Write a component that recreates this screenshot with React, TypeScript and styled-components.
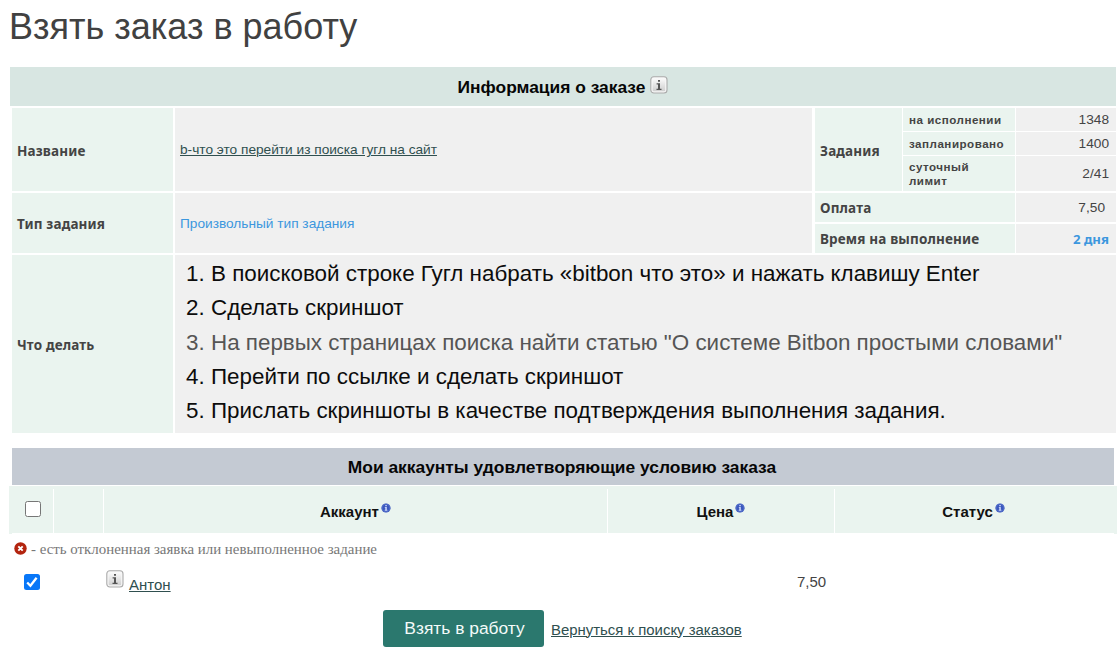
import React, { useState } from "react";
import styled, { createGlobalStyle } from "styled-components";

const GlobalStyle = createGlobalStyle`
  * { box-sizing: border-box; }
  body {
    margin: 0;
    background: #fff;
    color: #444;
    font-family: "Liberation Sans", Arial, sans-serif;
    overflow: hidden;
  }
`;

const Page = styled.main`
  width: 1119px;
  height: 655px;
  padding: 0 2px 0 9px;
`;

const Title = styled.h1`
  height: 67px;
  margin: 0;
  font-size: 36px;
  line-height: 53px;
  font-weight: 400;
  color: #414141;
  white-space: nowrap;
`;

const SectionHeader = styled.h2<{ $tone: "green" | "grey" }>`
  display: flex;
  align-items: center;
  justify-content: center;
  gap: 5px;
  margin: 0;
  font-size: 17.4px;
  font-weight: 700;
  color: #060606;
  white-space: nowrap;
  ${({ $tone }) =>
    $tone === "green"
      ? "height: 39px; margin: 0 1px; background: #d8e6e2; padding-top: 2px;"
      : "height: 37px; margin: 0 3px 1px; background: #c4cad3; padding-top: 1px; padding-right: 2px;"}
`;

const OrderGrid = styled.section`
  display: grid;
  grid-template-columns: 161px 637px 302px;
  grid-template-rows: 83px 60px 178px;
  column-gap: 2px;
  row-gap: 2px;
  margin: 2px 0 15px 3px;
`;

const LabelCell = styled.div<{ $shift?: number }>`
  display: flex;
  align-items: center;
  padding: ${({ $shift = 0 }) => $shift}px 5px 0;
  background: #eaf4ef;
  font: 700 13.5px "Noto Sans", sans-serif;
  letter-spacing: 0.15px;
  white-space: nowrap;
  color: #444;
`;

const ValueCell = styled.div`
  display: flex;
  align-items: center;
  padding: 0 5px;
  background: #f0f0f0;
  font-size: 13.68px;
`;

const TaskLink = styled.a`
  color: #2f4f4f;
  text-decoration: underline;
  white-space: nowrap;
`;

const TypeName = styled.span`
  color: #3c97de;
  white-space: nowrap;
`;

const TaskStats = styled.div`
  display: grid;
  grid-template-columns: 87px 112px 100px;
  grid-template-rows: 23px 23px 35px;
  gap: 1px;
  margin-left: 1px;

  & > :first-child {
    grid-row: 1 / 4;
  }
`;

const TermStats = styled.div`
  display: grid;
  grid-template-columns: 200px 100px;
  grid-template-rows: 29px 29px;
  row-gap: 2px;
  column-gap: 1px;
  margin-left: 1px;
`;

const SmallLabel = styled.div`
  display: flex;
  align-items: center;
  padding: 0 0 0 6px;
  background: #eaf4ef;
  font-size: 11.6px;
  line-height: 13.5px;
  font-weight: 700;
  letter-spacing: 0.5px;
`;

const NumberCell = styled.div<{ $inset?: number }>`
  display: flex;
  align-items: center;
  justify-content: flex-end;
  padding-right: ${({ $inset = 7 }) => $inset}px;
  background: #f0f0f0;
  font-size: 13.7px;
`;

const Term = styled.strong`
  font: 700 13.2px "Noto Sans", sans-serif;
  color: #3c97de;
`;

const Instructions = styled.div`
  grid-column: 2 / 4;
  background: #f0f0f0;
`;

const Steps = styled.ol`
  margin: 0;
  padding: 2px 0 0 36px;
  font-size: 22.4px;
  line-height: 34.25px;
  color: #0c0c0c;
  white-space: nowrap;
`;

const Step = styled.li<{ $muted?: boolean }>`
  color: ${({ $muted }) => ($muted ? "#555" : "inherit")};
`;

const AccountsHead = styled.div`
  height: 48px;
  padding: 0 3px;
  background: #eaf4ef;
`;

const HeadRow = styled.div`
  display: grid;
  grid-template-columns: 42px 50px 504px 227px 1fr;
  height: 48px;
  padding-top: 3px;
  border-bottom: 1px solid #fff;
`;

const HeadCell = styled.div<{ $last?: boolean }>`
  display: flex;
  align-items: center;
  justify-content: center;
  gap: 2px;
  padding-right: ${({ $last }) => ($last ? 2 : 0)}px;
  border-right: ${({ $last }) => ($last ? "0" : "1px solid #fff")};
  font-size: 15px;
  font-weight: 700;
  color: #111;
`;

const CheckCell = styled(HeadCell)`
  justify-content: flex-start;
  align-items: flex-start;
  padding: 12px 0 0 13px;
`;

const BlueMark = styled.svg`
  width: 10px;
  height: 10px;
  margin-bottom: 7px;
`;

const Checkbox = styled.button<{ $on: boolean }>`
  display: grid;
  place-items: center;
  flex: none;
  width: 16px;
  height: 16px;
  padding: 0;
  border-radius: 2.5px;
  border: ${({ $on }) => ($on ? "0" : "1.4px solid #767676")};
  background: ${({ $on }) => ($on ? "#0877f8" : "#fff")};
`;

const Legend = styled.p`
  display: flex;
  align-items: center;
  gap: 4px;
  height: 30px;
  margin: 0;
  padding-left: 5px;
  font: 14.92px "Liberation Serif", serif;
  color: #777;
  white-space: nowrap;
`;

const RejectedMark = styled.svg`
  width: 13px;
  height: 13px;
  margin-bottom: 2px;
`;

const AccountRow = styled.div`
  display: grid;
  grid-template-columns: 82px 691px 1fr;
  height: 46px;
  padding-left: 15px;
  font-size: 15px;
`;

const CheckSlot = styled.div`
  padding-top: 10px;
`;

const AccountName = styled.div`
  display: flex;
  align-items: flex-start;
  gap: 5px;
  padding-top: 6px;
`;

const NameLink = styled(TaskLink)`
  margin-top: 6px;
  line-height: 17px;
`;

const Price = styled.div`
  padding-top: 9px;
  line-height: 17px;
`;

const Actions = styled.footer`
  display: flex;
  align-items: center;
  gap: 7px;
  padding-left: 374px;
`;

const TakeButton = styled.button`
  width: 161px;
  height: 37px;
  padding: 0 0 0 2px;
  border: 0;
  border-radius: 3px;
  background: #2b786e;
  color: #f4fbf9;
  font: 17.4px "Liberation Sans", Arial, sans-serif;
`;

const BackLink = styled(TaskLink)`
  font-size: 14.93px;
  margin-top: 1px;
`;

const GreyInfo = styled.svg`
  flex: none;
  width: 18px;
  height: 18px;
`;

const HeaderInfo = styled(GreyInfo)`
  margin-bottom: 6px;
`;

function InfoShape({ id }: { id: string }) {
  return (
    <>
      <defs>
        <linearGradient id={id} x1="0" y1="0" x2="0" y2="1">
          <stop offset="0" stopColor="#fafafa" />
          <stop offset="1" stopColor="#cfcfcf" />
        </linearGradient>
      </defs>
      <rect x="0.8" y="0.8" width="16.2" height="16.2" rx="3" fill="#f7f7f7" stroke="#aaa" strokeWidth="1.1" />
      <rect x="2.6" y="2.6" width="12.6" height="12.6" rx="1" fill={`url(#${id})`} />
      <path d="M8 3.9h2v1.9H8zM6.6 7.2H10v5.5h1.5V14H6.5v-1.3H8V8.5H6.6z" fill="#555" />
    </>
  );
}

function HelpMark() {
  return (
    <BlueMark viewBox="0 0 10 10">
      <circle cx="5" cy="5" r="4.6" fill="#3b58bd" />
      <circle cx="5" cy="5" r="3.9" fill="none" stroke="#5f79d2" strokeWidth="0.6" />
      <path d="M4.3 2h1.5v1.2H4.3zM3.8 4h2v2.8h.6v.9H3.7v-.9h.6V4.8h-.5z" fill="#cdd8fb" />
    </BlueMark>
  );
}

function Check({ on, onToggle, label }: { on: boolean; onToggle: () => void; label: string }) {
  return (
    <Checkbox $on={on} role="checkbox" aria-checked={on} aria-label={label} onClick={onToggle}>
      {on && (
        <svg width="16" height="16" viewBox="0 0 16 16">
          <path d="M3.2 8.5l3.2 3.2 6.2-8" fill="none" stroke="#fff" strokeWidth="2.3" />
        </svg>
      )}
    </Checkbox>
  );
}

const steps = [
  { text: "В поисковой строке Гугл набрать «bitbon что это» и нажать клавишу Enter" },
  { text: "Сделать скриншот" },
  { text: 'На первых страницах поиска найти статью "О системе Bitbon простыми словами"', muted: true },
  { text: "Перейти по ссылке и сделать скриншот" },
  { text: "Прислать скриншоты в качестве подтверждения выполнения задания." },
];

export default function App() {
  const [all, setAll] = useState(false);
  const [chosen, setChosen] = useState(true);

  return (
    <Page>
      <GlobalStyle />
      <Title>Взять заказ в работу</Title>
      <SectionHeader $tone="green">
        Информация о заказе
        <HeaderInfo viewBox="0 0 18 18">
          <InfoShape id="order-info" />
        </HeaderInfo>
      </SectionHeader>

      <OrderGrid>
        <LabelCell $shift={2}>Название</LabelCell>
        <ValueCell>
          <TaskLink>b-что это перейти из поиска гугл на сайт</TaskLink>
        </ValueCell>
        <TaskStats>
          <LabelCell $shift={2}>Задания</LabelCell>
          <SmallLabel>на исполнении</SmallLabel>
          <NumberCell>1348</NumberCell>
          <SmallLabel>запланировано</SmallLabel>
          <NumberCell>1400</NumberCell>
          <SmallLabel>
            суточный
            <br />
            лимит
          </SmallLabel>
          <NumberCell>2/41</NumberCell>
        </TaskStats>

        <LabelCell $shift={1}>Тип задания</LabelCell>
        <ValueCell>
          <TypeName>Произвольный тип задания</TypeName>
        </ValueCell>
        <TermStats>
          <LabelCell>Оплата</LabelCell>
          <NumberCell $inset={11}>7,50</NumberCell>
          <LabelCell>Время на выполнение</LabelCell>
          <NumberCell>
            <Term>2 дня</Term>
          </NumberCell>
        </TermStats>

        <LabelCell $shift={1}>Что делать</LabelCell>
        <Instructions>
          <Steps>
            {steps.map((step) => (
              <Step key={step.text} $muted={step.muted}>
                {step.text}
              </Step>
            ))}
          </Steps>
        </Instructions>
      </OrderGrid>

      <SectionHeader $tone="grey">Мои аккаунты удовлетворяющие условию заказа</SectionHeader>
      <AccountsHead>
        <HeadRow>
          <CheckCell>
            <Check on={all} onToggle={() => setAll(!all)} label="Все аккаунты" />
          </CheckCell>
          <HeadCell />
          <HeadCell>
            Аккаунт
            <HelpMark />
          </HeadCell>
          <HeadCell>
            Цена
            <HelpMark />
          </HeadCell>
          <HeadCell $last>
            Статус
            <HelpMark />
          </HeadCell>
        </HeadRow>
      </AccountsHead>

      <Legend>
        <RejectedMark viewBox="0 0 13 13">
          <circle cx="6.5" cy="6.5" r="6.2" fill="#b3240f" />
          <path d="M4.3 4.3l4.4 4.4M8.7 4.3L4.3 8.7" stroke="#fff" strokeWidth="1.9" />
        </RejectedMark>
        - есть отклоненная заявка или невыполненное задание
      </Legend>
      <AccountRow>
        <CheckSlot>
          <Check on={chosen} onToggle={() => setChosen(!chosen)} label="Антон" />
        </CheckSlot>
        <AccountName>
          <GreyInfo viewBox="0 0 18 18">
            <InfoShape id="account-info" />
          </GreyInfo>
          <NameLink>Антон</NameLink>
        </AccountName>
        <Price>7,50</Price>
      </AccountRow>

      <Actions>
        <TakeButton>Взять в работу</TakeButton>
        <BackLink>Вернуться к поиску заказов</BackLink>
      </Actions>
    </Page>
  );
}
